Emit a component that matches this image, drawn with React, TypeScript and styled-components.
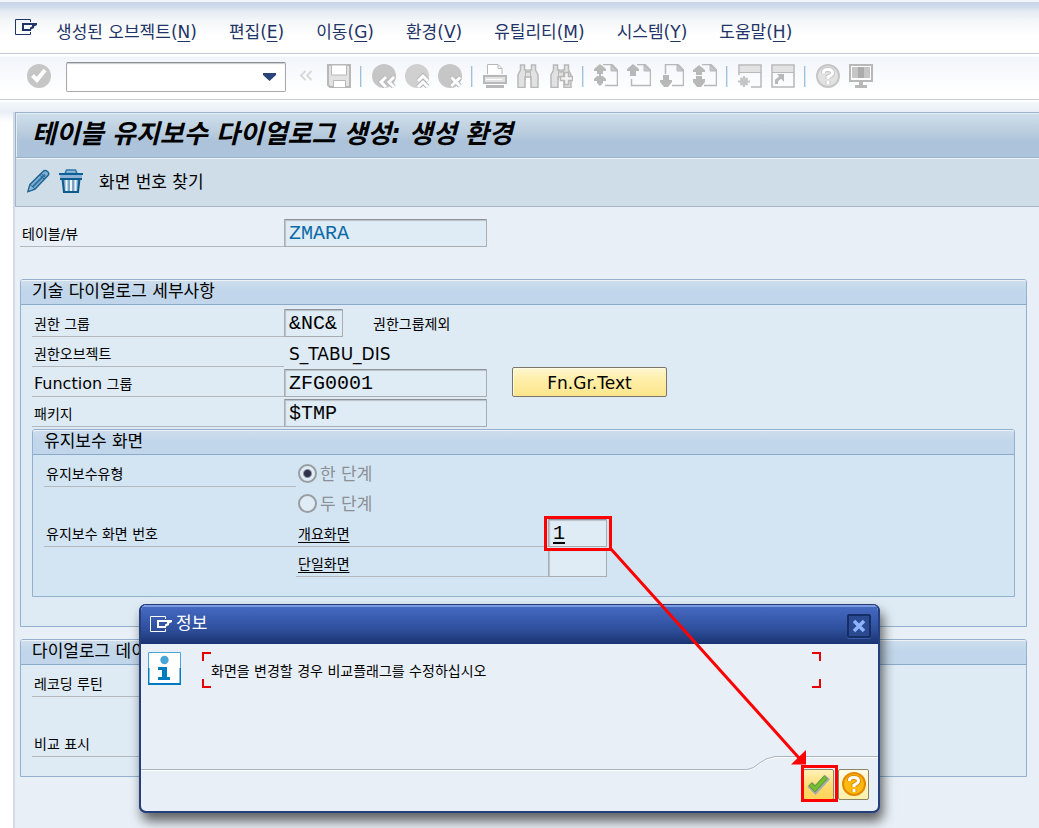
import React from 'react';
import styled, { createGlobalStyle, css } from 'styled-components';

const UI_FONT = '"DejaVu Sans", "Noto Sans CJK KR", sans-serif';
const TITLE_FONT = '"DejaVu Sans Condensed", "Noto Sans CJK KR", sans-serif';
const MONO_FONT = '"Liberation Mono", "Noto Sans CJK KR", monospace';

const GlobalStyle = createGlobalStyle`
  *, *::before, *::after { box-sizing: border-box; }
  body { margin: 0; background: #fff; }
  button, input, select { font: inherit; color: inherit; margin: 0; }
`;

const Page = styled.div`
  position: relative;
  min-height: 100vh;
  display: flex;
  flex-direction: column;
  overflow: hidden;
  font-family: ${UI_FONT};
  font-size: 17px;
  line-height: 24px;
  color: #000;
  background: #fff;
`;

/* ---------- menu bar ---------- */

const MenuBar = styled.header`
  display: flex;
  align-items: center;
  height: 54px;
  padding: 8px 15px 0;
  border-top: 2px solid #f1f5fa;
  border-bottom: 1px solid #bfc7d8;
  background: linear-gradient(#c9d6e9 0, #cfdaea 5px, #e3eaf1 9px, #f3f6f8 18px, #fff 34px);
`;

const MenuIcon = styled.span`
  display: flex;
  width: 41px;
  height: 26px;
`;

const MenuNav = styled.nav`
  display: flex;
  gap: 32px;
`;

const MenuItem = styled.button`
  padding: 0;
  border: 0;
  background: none;
  color: #1f3468;
  white-space: nowrap;
  u { text-underline-offset: 3px; }
`;

/* ---------- system toolbar ---------- */

const Toolbar = styled.div`
  display: flex;
  align-items: center;
  height: 46px;
  padding: 0 22px;
  border-bottom: 1px solid #c9cdd4;
  background: linear-gradient(#fff 0, #fff 2px, #f2f5fb 3px, #fff 38px);
`;

const ToolButton = styled.button`
  flex: none;
  display: flex;
  align-items: center;
  justify-content: center;
  width: 33px;
  height: 32px;
  padding: 0 0 2px;
  border: 0;
  background: none;
`;

const ToolSeparator = styled.span`
  flex: none;
  width: 2px;
  height: 21px;
  margin: 0 5px;
  background: linear-gradient(90deg, #9fc0dc 50%, #d8e6f2 50%);
`;

const CommandField = styled.label`
  flex: none;
  position: relative;
  display: block;
  width: 220px;
  height: 30px;
  margin: 0 3px 0 11px;
  svg {
    position: absolute;
    right: 10px;
    top: 11px;
    pointer-events: none;
  }
`;

const CommandSelect = styled.select`
  appearance: none;
  width: 100%;
  height: 100%;
  padding: 0 28px 0 6px;
  border: 1px solid #a7a9ac;
  border-top-color: #8d9094;
  border-radius: 2px;
  background: #fff;
  box-shadow: inset 0 1px 1px #c8cacd;
`;

/* ---------- work area ---------- */

const Workspace = styled.main`
  flex: 1;
  display: flex;
  flex-direction: column;
  padding-left: 13px;
  border-top: 2px solid #fff;
  background: linear-gradient(#f3f7fb, #e9eff6 10px, #fff 20px, #fff);
`;

const Screen = styled.section`
  flex: 1;
  margin-top: 10px;
  border-left: 2px solid #d3dae6;
  background: #e8eff6;
`;

const TitleBar = styled.h1`
  margin: 0;
  height: 46px;
  padding: 0 16px;
  border: 1px solid #9bb3c9;
  border-right: 0;
  box-shadow: inset 1px 1px 0 #e3edf6;
  background: linear-gradient(#cfdfec, #bccfdf 18px, #adc3da 28px, #acc4dc);
  font-family: ${TITLE_FONT};
  font-size: 26px;
  line-height: 42px;
  font-weight: 700;
  font-style: italic;
  white-space: nowrap;
`;

const AppToolbar = styled.div`
  display: flex;
  align-items: center;
  height: 49px;
  padding: 0 5px;
  border: solid #a6b6c6;
  border-width: 0 0 1px 1px;
  box-shadow: inset 0 1px 0 #eef4f9;
  background: #cfdde8;
`;

const TextButton = styled.button`
  padding: 0 12px;
  border: 0;
  background: none;
  white-space: nowrap;
`;

const Form = styled.form`
  padding: 10px 12px 12px 5px;
`;

const Row = styled.div`
  display: flex;
  height: 30px;
  align-items: flex-end;
`;

const Label = styled.label<{ $width?: number; $plain?: boolean }>`
  flex: none;
  width: ${(p) => p.$width ?? 252}px;
  height: 30px;
  padding: 5px 2px 0;
  border-bottom: 1px solid ${(p) => (p.$plain ? 'transparent' : '#b4b8bc')};
  font-size: 14px;
  white-space: nowrap;
  a { color: inherit; text-underline-offset: 3px; }
`;

const Large = styled.span`
  font-size: 16px;
`;

const Field = styled.input<{ $width?: number; $tone?: string; $cursor?: boolean }>`
  flex: none;
  width: ${(p) => p.$width ?? 203}px;
  height: 28px;
  padding: 0 4px;
  border: 1px solid #a9adb1;
  border-top-color: #8f9397;
  border-radius: 1px;
  outline: 0;
  background: #dfebf5;
  box-shadow: inset 1px 1px 1px #b8c0c8;
  font-family: ${MONO_FONT};
  font-size: 20px;
  color: ${(p) => p.$tone ?? '#000'};
  ${(p) => p.$cursor && css`
    text-decoration: underline 2px;
    text-underline-offset: 3px;
  `}
`;

const Note = styled.span`
  padding: 5px 30px 0;
  height: 30px;
  font-size: 14px;
`;

const Value = styled.output`
  height: 30px;
  padding: 5px 5px 0;
`;

const YellowButton = styled.button`
  width: 155px;
  height: 30px;
  margin-left: 25px;
  padding: 2px 0 0;
  border: 1px solid #7b7768;
  border-radius: 2px;
  background: linear-gradient(#fff6cf, #ffeea6 45%, #fbe58c);
  box-shadow: inset 1px 1px 0 #fffbe8;
`;

const Group = styled.section<{ $inner?: boolean; $minHeight: number }>`
  min-height: ${(p) => p.$minHeight}px;
  margin-top: ${(p) => (p.$inner ? 2 : 12)}px;
  border: 1px solid #93b0ce;
  border-radius: 3px 3px 0 0;
  background: ${(p) => (p.$inner ? '#d3e4f2' : '#deeaf4')};
`;

const GroupTitle = styled.h2`
  height: 25px;
  margin: 0;
  padding: 0 11px;
  border-bottom: 1px solid #8ba9c8;
  border-radius: 2px 2px 0 0;
  box-shadow: inset 0 1px 0 #edf3f8;
  background: linear-gradient(#cddded, #c1d6ea 12px);
  font-size: 17px;
  line-height: 22px;
  font-weight: 400;
  white-space: nowrap;
`;

const GroupBody = styled.div`
  padding: 2px 11px 0;
`;

const FirstGroupSpacer = styled.div`
  height: 20px;
`;

const RadioLabel = styled.label`
  display: flex;
  align-items: center;
  gap: 3px;
  height: 30px;
  padding: 3px 2px 0;
  color: #8b9097;
`;

const Radio = styled.input`
  appearance: none;
  width: 19px;
  height: 19px;
  border: 2px solid #999da0;
  border-radius: 50%;
  background: #dfebf5;
  &:checked { background: radial-gradient(circle, #303048 0, #303048 3px, #dfebf5 5px); }
`;

/* ---------- message window ---------- */

const Dialog = styled.div`
  position: absolute;
  left: 139px;
  top: 604px;
  width: 741px;
  height: 209px;
  display: flex;
  flex-direction: column;
  border: 2px solid #243f7c;
  border-width: 1px 2px 2px;
  border-radius: 7px;
  overflow: hidden;
  background: #e8eff6;
`;

const DialogShadow = styled(Dialog)`
  background: none;
  overflow: visible;
  box-shadow: 3px 8px 12px rgba(0, 0, 0, 0.6);
`;

const DialogHeader = styled.div`
  flex: none;
  display: flex;
  align-items: center;
  height: 39px;
  padding: 0 7px 0 9px;
  border-top: 2px solid #7c9ade;
  background: linear-gradient(#4569c2, #2f4f9c 60%, #1a3370);
  color: #fff;
  > svg { margin-bottom: 4px; }
`;

const DialogTitle = styled.h2`
  flex: 1;
  margin: 0 3px;
  padding-bottom: 5px;
  font-size: 17px;
  font-weight: 400;
`;

const CloseButton = styled.button`
  display: flex;
  align-items: center;
  justify-content: center;
  width: 24px;
  height: 24px;
  padding: 0;
  border: 2px solid #162e66;
  border-radius: 2px;
  background: #2b4a91;
  box-shadow: 0 1px 0 #3a5cab;
  svg { margin: 0; }
`;

const DialogContent = styled.div`
  flex: 1;
  display: flex;
  align-items: flex-start;
  padding: 8px 57px 0 7px;
  gap: 21px;
`;

const RED = 'linear-gradient(#e60000, #e60000)';

const Message = styled.p`
  flex: 1;
  margin: 0;
  height: 36px;
  padding: 0 9px;
  font-size: 14px;
  line-height: 38px;
  background:
    ${RED} left top / 9px 2px, ${RED} left top / 2px 9px,
    ${RED} right top / 9px 2px, ${RED} right top / 2px 9px,
    ${RED} left bottom / 9px 2px, ${RED} left bottom / 2px 9px,
    ${RED} right bottom / 9px 2px, ${RED} right bottom / 2px 9px;
  background-repeat: no-repeat;
`;

const DialogFooter = styled.div`
  flex: none;
  display: flex;
  align-items: flex-start;
  height: 55px;
`;

const FooterEdge = styled.span`
  flex: 1;
  height: 2px;
  margin-top: 13px;
  background: linear-gradient(#a9b3c2 50%, #fff 50%);
`;

const FooterButtons = styled.div`
  display: flex;
  gap: 4px;
  height: 100%;
  padding: 12px 9px 0 24px;
  border-top: 1px solid #a9b3c2;
  box-shadow: inset 0 1px 0 #fff;
`;

const IconButton = styled.button<{ $active?: boolean }>`
  display: flex;
  align-items: center;
  justify-content: center;
  width: 31px;
  height: 31px;
  padding: 0 0 2px;
  border: 1px solid #8a8468;
  border-radius: 2px;
  background: ${(p) =>
    p.$active ? 'linear-gradient(#fff1b8, #fbd96b 60%, #ffd45a)' : 'linear-gradient(#fffbe6, #fdf0a8)'};
`;

const Annotation = styled.svg`
  position: absolute;
  left: 0;
  top: 0;
  pointer-events: none;
`;

/* ---------- icons ---------- */

const Svg = ({ w = 24, h = 24, children }: { w?: number; h?: number; children: React.ReactNode }) => (
  <svg width={w} height={h} viewBox={`0 0 ${w} ${h}`} fill="none" aria-hidden="true">
    {children}
  </svg>
);

const WindowIcon = ({ color }: { color: string }) => (
  <Svg w={23} h={16}>
    <path d="M15.500 3V.5H.5v15h15V13" stroke={color} />
    <path d="M7 4h15v2l-3 1.500V9l-3 1.500V12H7zm2 2v4h6V8.500l2-1V6z" fill={color} fillRule="evenodd" />
  </Svg>
);

const G = '#c6c6c6';
const D = '#b8b8b8';
const L = '#e2e2e2';

const CheckIcon = () => (
  <Svg>
    <circle cx="12" cy="12" r="12" fill={G} />
    <path d="M5.500 11.500 10 16 18 6" stroke="#fff" strokeWidth="4" />
  </Svg>
);
const CollapseIcon = () => (
  <Svg>
    <path d="M11.500 7 7 11.500l4.500 4.500M17.500 7 13 11.500l4.500 4.500" stroke="#d9d9d9" strokeWidth="2" />
  </Svg>
);
const SaveIcon = () => (
  <Svg>
    <path d="M1 1h22v22H3l-2-2z" fill={L} stroke={D} strokeWidth="2" />
    <path d="M4.500 1h15v10h-15z" fill="#fff" stroke={D} />
    <path d="M6.500 23v-6.500h12V23" fill="#fff" stroke={D} />
  </Svg>
);
const RoundIcon = ({ kind }: { kind: 'back' | 'exit' | 'cancel' }) => {
  const d = {
    back: 'M14 13 9 18l5 5M22 13 17 18l5 5',
    exit: 'M13 17 18 12l5 5M13 23 18 18l5 5',
    cancel: 'm13.500 13.500 8.500 8.500m0-8.500-8.500 8.500',
  }[kind];
  return (
    <Svg>
      <circle cx="12" cy="12" r="12" fill={kind === 'exit' ? '#d0d0d0' : G} />
      <path d={d} stroke={D} strokeWidth="5" />
      <path d={d} stroke="#fff" strokeWidth="3" />
    </Svg>
  );
};
const PrintIcon = () => (
  <Svg>
    <path d="M4.500 10V.5H15l4 4V10" fill="#fff" stroke={D} />
    <path d="M15 .5v4h4" stroke={D} />
    <path d="M1 12h22v7H1z" fill={L} stroke={D} strokeWidth="2" />
    <path d="M3 15.500h16" stroke="#fff" />
    <path d="M3 21h18v3H3z" fill={D} />
  </Svg>
);
const FindIcon = ({ next }: { next?: boolean }) => (
  <Svg>
    <path
      d="M4.500 1h4v5h2.500v2h2V6h2.500V1h4v5l2.500 5v12.500h-7V13h-6v10.500H2V11l2.500-5z"
      fill={L}
      stroke={D}
      strokeWidth="1.500"
    />
    <path d="M9.500 7v9M14.500 7v9" stroke={D} />
    {next && <path d="M15.500 8.500h4v4h4v4h-4v4h-4v-4h-4v-4h4z" fill="#f4f4f4" stroke={D} strokeWidth="1.500" />}
  </Svg>
);
const SheetIcon = ({ kind }: { kind: 'first' | 'prev' | 'next' | 'last' }) => (
  <Svg>
    <path
      d={
        kind === 'next'
          ? 'M5.500 10V.5H18l5.500 5.500v15.500H12'
          : kind === 'prev'
            ? 'M10 .5h8l5.500 5.500v15.500h-19V15'
            : 'M9 .5h9l5.500 5.500v15.500H11'
      }
      stroke={D}
      strokeWidth="1.500"
    />
    <path d="M17 1v6h6z" fill={G} stroke={D} />
    {kind === 'first' && (
      <path d="M6 0 0 5v2h3v3h2v2H3l-3 3v2h3v2l3 3 3-3v-2h3v-2l-3-3H7v-2h2V7h3V5z" fill={D} />
    )}
    {kind === 'prev' && <path d="M6 0 0 5v2h3v5h6V7h3V5z" fill={D} />}
    {kind === 'next' && <path d="M3 11h6v5h3v2l-4 5H4l-4-5v-2h3z" fill={D} />}
    {kind === 'last' && <path d="M6 1 0 6v2h3v3h6V8h3V6zM3 12h6v3h3v3l-4 5H4l-4-5v-3h3z" fill={D} />}
  </Svg>
);
const SessionIcon = () => (
  <Svg>
    <path d="M1 11V1h22v22H13" stroke={D} strokeWidth="1.500" />
    <path d="M2 2h20v6H2z" fill={L} />
    <path d="M1 8.500h22" stroke={D} />
    <path d="M6 12v11M0 17.500h12M2.500 14l7 7m0-7-7 7" stroke={G} strokeWidth="2" />
    <circle cx="6" cy="17.500" r="4" fill={G} />
  </Svg>
);
const ShortcutIcon = () => (
  <Svg>
    <path d="M1 1h22v22H1z" stroke={D} strokeWidth="1.500" />
    <path d="M2 2h20v6H2z" fill={L} />
    <path d="M1 8.500h22" stroke={D} />
    <path d="M5.500 20v-3.500l5-4" stroke={D} strokeWidth="3" />
    <path d="M6 10h7v8z" fill={D} />
  </Svg>
);
const HelpMark = ({ ring, fill, mark }: { ring: string; fill: string; mark: string }) => (
  <Svg>
    <circle cx="12" cy="12" r="11" fill={fill} stroke={ring} strokeWidth="2" />
    <path d="M7.500 9V8q0-2.500 4.500-2.500T16.500 9q0 2-4.500 4v2M12 17v3" stroke={ring} strokeWidth="5" />
    <path d="M7.500 9V8q0-2.500 4.500-2.500T16.500 9q0 2-4.500 4v2M12 17v3" stroke={mark} strokeWidth="3" />
  </Svg>
);
const MonitorIcon = () => (
  <Svg>
    <path d="M1 1h22v16H1z" fill="#fff" stroke={D} strokeWidth="2" />
    <path d="M3 3h18v11H3z" fill={G} />
    <path d="M9 3h6v11H9z" fill="#acacac" />
    <path d="M10 18h4v3h4v3H6v-3h4z" fill={D} />
  </Svg>
);
const PencilIcon = () => (
  <Svg>
    <path d="m2 22.500 2-7L17 2.500q2-2 4.500 0t0 4.500L9 20z" fill="#86aed2" stroke="#1d6595" strokeWidth="1.500" />
    <path d="m6.500 18 12.500-12.500" stroke="#2d74a5" strokeWidth="2" />
    <path d="m15 4.500 5 4.500M13.500 6l5 4.500" stroke="#1d6595" />
    <path d="m4 15.500 5 4.500-7 2.500z" fill="#8fb4d4" stroke="#1d6595" />
  </Svg>
);
const TrashIcon = () => (
  <Svg>
    <path d="M6 4.500 7.500 1h9L18 4.500z" fill="#9bb9da" stroke="#2f78a8" strokeWidth="1.500" />
    <path d="M0 4h24v2H0z" fill="#0b6299" />
    <path d="M1 6h22v3H1z" fill="#8fb2d6" />
    <path d="M3.500 10h17L19 23H5z" fill="#7aa5c9" stroke="#0b5b8f" strokeWidth="2" />
    <path d="M7.500 11v11M12 11v11M16.500 11v11" stroke="#f2f7fb" strokeWidth="2" />
    <path d="M1 10h22" stroke="#0b5b8f" strokeWidth="2" />
  </Svg>
);
const InfoIcon = () => (
  <Svg w={33} h={33}>
    <path d="M.5 17V.5h32V17" fill="#fff" stroke="#4ba4d6" />
    <path d="M.5 16v16h32V16" fill="#fff" stroke="#007bbf" strokeWidth="2" />
    <circle cx="16.500" cy="8" r="4.200" fill="#4ba4d6" />
    <path d="M10 15h9v10h3v3H10v-3h4v-7h-4z" fill="#007bbf" />
  </Svg>
);
const GreenCheck = () => (
  <Svg>
    <path d="m3 12.500 5.500 5.500L20.500 5" stroke="#a9abb0" strokeWidth="7" />
    <path d="m3 12 5 5L19 5" stroke="#5f9a3c" strokeWidth="5" />
    <path d="m3.500 12.500 4.500 4.500L18.500 5.500" stroke="#78bf2e" strokeWidth="3" />
  </Svg>
);

type Tool = { label: string; icon: React.ReactNode };

const toolGroups: Tool[][] = [
  [
    { label: '명령 필드 접기', icon: <CollapseIcon /> },
    { label: '저장', icon: <SaveIcon /> },
  ],
  [
    { label: '뒤로', icon: <RoundIcon kind="back" /> },
    { label: '종료', icon: <RoundIcon kind="exit" /> },
    { label: '취소', icon: <RoundIcon kind="cancel" /> },
  ],
  [
    { label: '인쇄', icon: <PrintIcon /> },
    { label: '찾기', icon: <FindIcon /> },
    { label: '다음 찾기', icon: <FindIcon next /> },
  ],
  [
    { label: '첫 페이지', icon: <SheetIcon kind="first" /> },
    { label: '이전 페이지', icon: <SheetIcon kind="prev" /> },
    { label: '다음 페이지', icon: <SheetIcon kind="next" /> },
    { label: '마지막 페이지', icon: <SheetIcon kind="last" /> },
  ],
  [
    { label: '새 세션', icon: <SessionIcon /> },
    { label: '바로가기', icon: <ShortcutIcon /> },
  ],
  [
    { label: '도움말', icon: <HelpMark ring={G} fill={L} mark="#fff" /> },
    { label: '레이아웃', icon: <MonitorIcon /> },
  ],
];

const menus: [string, string][] = [
  ['생성된 오브젝트', 'N'],
  ['편집', 'E'],
  ['이동', 'G'],
  ['환경', 'V'],
  ['유틸리티', 'M'],
  ['시스템', 'Y'],
  ['도움말', 'H'],
];

export default function App() {
  return (
    <Page>
      <GlobalStyle />
      <MenuBar>
        <MenuIcon>
          <WindowIcon color="#1f3468" />
        </MenuIcon>
        <MenuNav>
          {menus.map(([name, key]) => (
            <MenuItem key={key} type="button">
              {name}(<u>{key}</u>)
            </MenuItem>
          ))}
        </MenuNav>
      </MenuBar>

      <Toolbar>
        <ToolButton type="button" aria-label="확인">
          <CheckIcon />
        </ToolButton>
        <CommandField>
          <CommandSelect aria-label="명령" />
          <Svg w={13} h={8}>
            <path d="M0 0h13v2L6.500 8 0 2z" fill="#2a4378" />
          </Svg>
        </CommandField>
        {toolGroups.map((tools, i) => (
          <React.Fragment key={tools[0].label}>
            {i > 0 && <ToolSeparator />}
            {tools.map((tool) => (
              <ToolButton key={tool.label} type="button" aria-label={tool.label}>
                {tool.icon}
              </ToolButton>
            ))}
          </React.Fragment>
        ))}
      </Toolbar>

      <Workspace>
        <Screen>
          <TitleBar>테이블 유지보수 다이얼로그 생성: 생성 환경</TitleBar>
          <AppToolbar>
            <ToolButton type="button" aria-label="변경">
              <PencilIcon />
            </ToolButton>
            <ToolButton type="button" aria-label="삭제">
              <TrashIcon />
            </ToolButton>
            <TextButton type="button">화면 번호 찾기</TextButton>
          </AppToolbar>

          <Form>
            <Row>
              <Label $width={264} htmlFor="table">테이블/뷰</Label>
              <Field id="table" defaultValue="ZMARA" $tone="#0a6aa8" readOnly />
            </Row>
            <FirstGroupSpacer />

            <Group $minHeight={348}>
              <GroupTitle>기술 다이얼로그 세부사항</GroupTitle>
              <GroupBody>
                <Row>
                  <Label htmlFor="auth-group">권한 그룹</Label>
                  <Field id="auth-group" $width={59} defaultValue="&NC&" />
                  <Note>권한그룹제외</Note>
                </Row>
                <Row>
                  <Label htmlFor="auth-object">권한오브젝트</Label>
                  <Value id="auth-object">S_TABU_DIS</Value>
                </Row>
                <Row>
                  <Label htmlFor="function-group">
                    <Large>Function</Large> 그룹
                  </Label>
                  <Field id="function-group" defaultValue="ZFG0001" />
                  <YellowButton type="button">Fn.Gr.Text</YellowButton>
                </Row>
                <Row>
                  <Label htmlFor="package">패키지</Label>
                  <Field id="package" defaultValue="$TMP" />
                </Row>

                <Group $inner $minHeight={168}>
                  <GroupTitle>유지보수 화면</GroupTitle>
                  <GroupBody>
                    <Row>
                      <Label as="span">유지보수유형</Label>
                      <RadioLabel>
                        <Radio type="radio" name="steps" defaultChecked disabled />한 단계
                      </RadioLabel>
                    </Row>
                    <Row>
                      <Label as="span" $plain />
                      <RadioLabel>
                        <Radio type="radio" name="steps" disabled />두 단계
                      </RadioLabel>
                    </Row>
                    <Row>
                      <Label as="span">유지보수 화면 번호</Label>
                      <Label htmlFor="overview">
                        <a href="#overview">개요화면</a>
                      </Label>
                      <Field id="overview" $width={59} $cursor defaultValue="1" />
                    </Row>
                    <Row>
                      <Label as="span" $plain />
                      <Label htmlFor="single">
                        <a href="#single">단일화면</a>
                      </Label>
                      <Field id="single" $width={59} />
                    </Row>
                  </GroupBody>
                </Group>
              </GroupBody>
            </Group>

            <Group $minHeight={138}>
              <GroupTitle>다이얼로그 데이터</GroupTitle>
              <GroupBody>
                <Row>
                  <Label as="span">레코딩 루틴</Label>
                </Row>
                <Row />
                <Row>
                  <Label as="span">비교 표시</Label>
                </Row>
              </GroupBody>
            </Group>
          </Form>
        </Screen>
      </Workspace>

      <DialogShadow as="div" aria-hidden="true" />
      <Dialog role="dialog" aria-labelledby="dialog-title">
        <DialogHeader>
          <WindowIcon color="#fff" />
          <DialogTitle id="dialog-title">정보</DialogTitle>
          <CloseButton type="button" aria-label="닫기">
            <Svg w={14} h={14}>
              <path d="m2 2 10 10M12 2 2 12" stroke="#8fb4ff" strokeWidth="3.500" />
            </Svg>
          </CloseButton>
        </DialogHeader>
        <DialogContent>
          <InfoIcon />
          <Message>화면을 변경할 경우 비교플래그를 수정하십시오</Message>
        </DialogContent>
        <DialogFooter>
          <FooterEdge />
          <Svg w={36} h={15}>
            <path d="M0 14.500h4Q10 14 16 8.500T32 1.500h4" stroke="#fff" />
            <path d="M0 13.500h4Q10 13 16 7.500T32 .5h4" stroke="#a9b3c2" />
          </Svg>
          <FooterButtons>
            <IconButton type="button" $active aria-label="계속">
              <GreenCheck />
            </IconButton>
            <IconButton type="button" aria-label="도움말">
              <HelpMark ring="#e08a00" fill="#ffb90f" mark="#fff" />
            </IconButton>
          </FooterButtons>
        </DialogFooter>
      </Dialog>

      <Annotation width="860" height="820" viewBox="0 0 860 820" fill="none" aria-hidden="true">
        <path d="M545.500 517.500h65v32h-65zM802.500 766.500h34v34h-34z" stroke="#f00" strokeWidth="3" />
        <path d="M611 549 799 758" stroke="#f00" strokeWidth="3" />
        <path d="M806 750v14.500H791z" fill="#f00" />
      </Annotation>
    </Page>
  );
}
